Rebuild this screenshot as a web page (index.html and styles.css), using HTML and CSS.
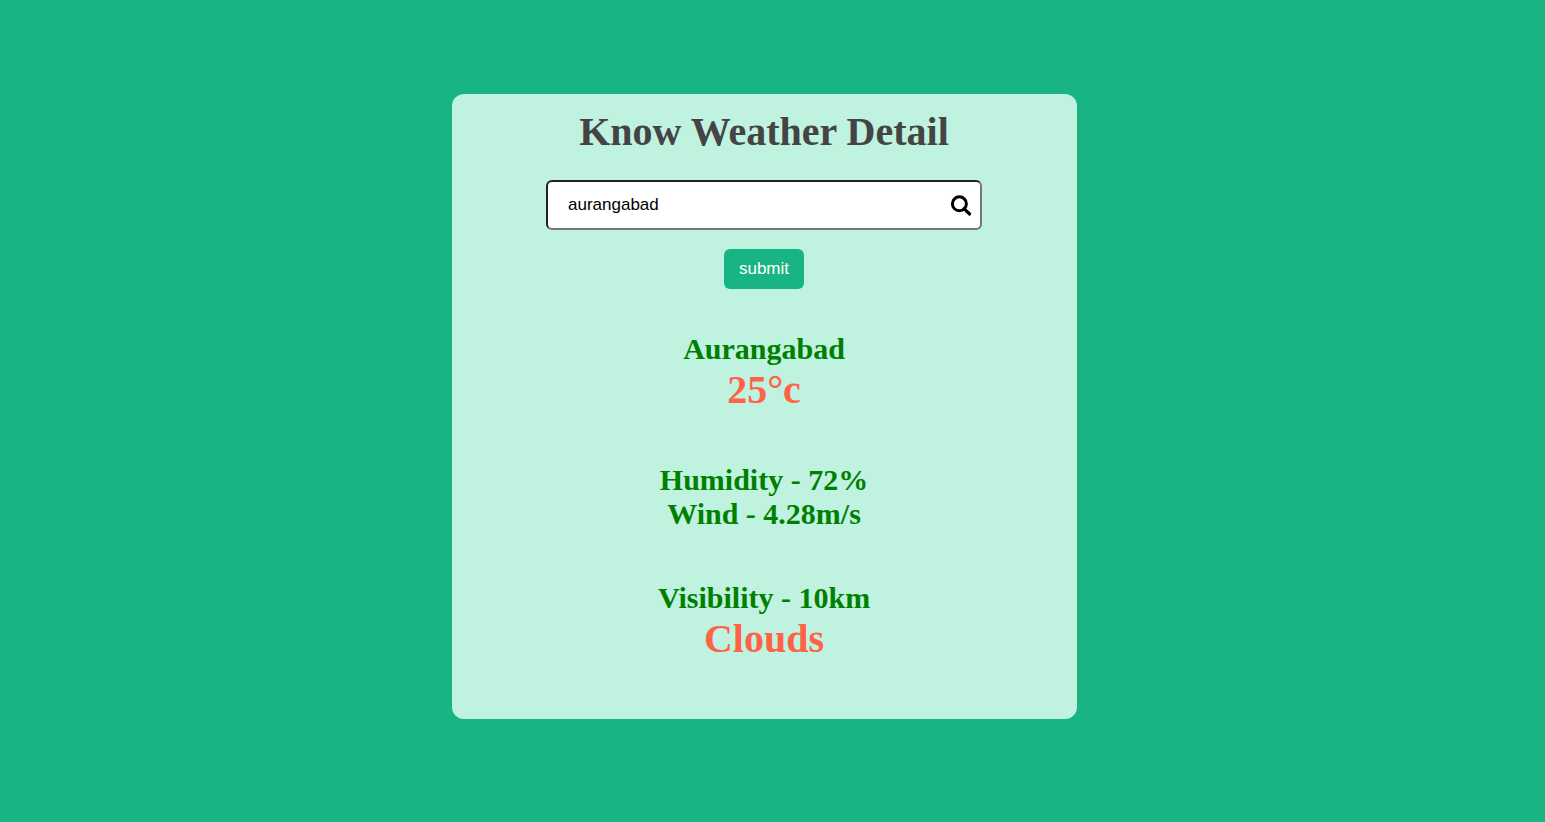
FILE: index.html
```html
<!DOCTYPE html>
<html lang="en">
<head>
<meta charset="utf-8">
<meta name="viewport" content="width=device-width, initial-scale=1">
<title>Know Weather Detail</title>
<link rel="stylesheet" href="styles.css">
</head>
<body>
<main class="page">
  <section class="card">
    <h1 class="title">Know Weather Detail</h1>
    <form class="search" onsubmit="return false">
      <div class="field">
        <input class="city-input" type="text" value="aurangabad" aria-label="City">
        <svg class="search-icon" viewBox="0 0 24 24" aria-hidden="true">
          <circle cx="10.400" cy="9.800" r="7" fill="none" stroke="#000" stroke-width="3"/>
          <path d="M15 14.600 20.600 20" fill="none" stroke="#000" stroke-width="3.200" stroke-linecap="round"/>
        </svg>
      </div>
      <button class="submit" type="submit">submit</button>
    </form>
    <div class="results">
      <div class="group">
        <h2 class="detail">Aurangabad</h2>
        <p class="highlight">25°c</p>
      </div>
      <div class="group">
        <p class="detail">Humidity - 72%</p>
        <p class="detail">Wind - 4.28m/s</p>
      </div>
      <div class="group">
        <p class="detail">Visibility - 10km</p>
        <p class="highlight">Clouds</p>
      </div>
    </div>
  </section>
</main>
</body>
</html>
```

FILE: styles.css
```css
* {
  box-sizing: border-box;
  margin: 0;
}

body {
  background: #18b484;
  font-family: "Liberation Serif", "Times New Roman", serif;
}

.page {
  min-height: 100vh;
  display: flex;
  align-items: center;
  justify-content: center;
  padding: 0 16px 9px 0;
}

.card {
  width: 100%;
  max-width: 625px;
  padding: 15px 16px 57px 15px;
  border-radius: 12px;
  background: #bff2df;
  text-align: center;
}

.title {
  color: #444;
  font-size: 40px;
  line-height: 46px;
}

.search {
  display: flex;
  flex-direction: column;
  align-items: center;
  gap: 19px;
  margin-top: 25px;
}

.field {
  position: relative;
  width: 100%;
  max-width: 436px;
}

.city-input {
  display: block;
  width: 100%;
  height: 50px;
  padding: 0 44px 0 20px;
  border: 2px inset #767676;
  border-radius: 6px;
  background: #fff;
  color: #000;
  font-family: "Liberation Sans", Arial, sans-serif;
  font-size: 17px;
}

.search-icon {
  position: absolute;
  top: 14px;
  right: 9px;
  width: 24px;
  height: 24px;
  pointer-events: none;
}

.submit {
  width: 80px;
  height: 40px;
  padding: 0;
  border: 0;
  border-radius: 6px;
  background: #18b484;
  color: #fff;
  font-family: "Liberation Sans", Arial, sans-serif;
  font-size: 17px;
}

.results {
  display: flex;
  flex-direction: column;
  gap: 50px;
  margin-top: 43px;
}

.detail {
  color: green;
  font-size: 30px;
  font-weight: bold;
  line-height: 34px;
}

.highlight {
  color: tomato;
  font-size: 40px;
  font-weight: bold;
  line-height: 47px;
}
```
